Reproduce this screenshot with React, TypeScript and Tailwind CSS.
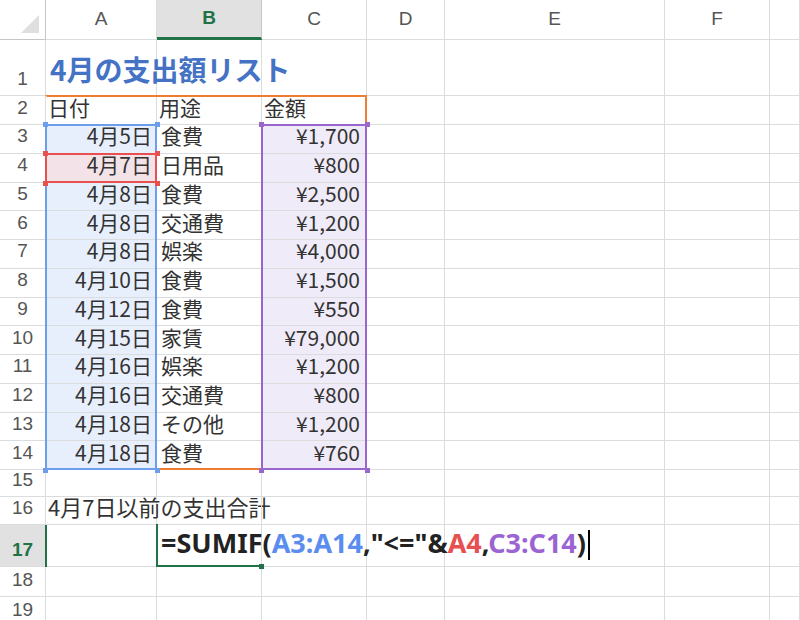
const cols = [46, 111, 105, 105, 78, 220, 105, 30];
const colX = cols.reduce<number[]>((a, w) => [...a, a[a.length - 1] + w], [0]);
const heights = [56, 29, ...Array(12).fill(28.75), 27, 28, 42, 30, 30];
const rowY = heights.reduce<number[]>((a, h) => [...a, a[a.length - 1] + h], [40]);

const dates = ['4月5日', '4月7日', '4月8日', '4月8日', '4月8日', '4月10日', '4月12日', '4月15日', '4月16日', '4月16日', '4月18日', '4月18日'];
const uses = ['食費', '日用品', '食費', '交通費', '娯楽', '食費', '食費', '家賃', '娯楽', '交通費', 'その他', '食費'];
const amounts = ['¥1,700', '¥800', '¥2,500', '¥1,200', '¥4,000', '¥1,500', '¥550', '¥79,000', '¥1,200', '¥800', '¥1,200', '¥760'];

const Box = ({ c1, r1, c2, r2, color, handles, noLeft }: { c1: number; r1: number; c2: number; r2: number; color: string; handles?: boolean; noLeft?: boolean }) => {
  const l = colX[c1], t = rowY[r1 - 1], w = colX[c2 + 1] - l, h = rowY[r2] - t;
  return (
    <div className="absolute" style={{ left: l - 1, top: t - 1, width: w + 1, height: h + 1, border: `2px solid ${color}`, borderLeftColor: noLeft ? 'transparent' : color }}>
      {handles &&
        [[-4, -4], [w - 3, -4], [-4, h - 3], [w - 3, h - 3]].map(([x, y], i) => (
          <div key={i} className="absolute w-[5px] h-[5px]" style={{ left: x, top: y, background: color }} />
        ))}
    </div>
  );
};

export default function App() {
  const cell = 'border-r border-b border-[#dadcdd] text-[21px] text-[#333] flex items-end pb-[1px] overflow-visible whitespace-nowrap';
  return (
    <div className="relative w-[800px] h-[620px] overflow-hidden bg-white" style={{ fontFamily: '"Noto Sans CJK JP", "Liberation Sans", sans-serif' }}>
      <div className="grid" style={{ gridTemplateColumns: cols.map((c) => c + 'px').join(' '), gridTemplateRows: [40, ...heights].map((h) => h + 'px').join(' ') }}>
        <div className="bg-white border-r border-b border-[#c6c6c6] relative">
          <div className="absolute right-[6px] bottom-[6px] w-0 h-0 border-l-[18px] border-l-transparent border-b-[18px] border-b-[#dfdfdf]" />
        </div>
        {['A', 'B', 'C', 'D', 'E', 'F', ''].map((l) => (
          <div key={l} className={`flex items-center justify-center text-[19px] border-r border-b ${l === 'B' ? 'bg-[#e1e1e1] text-[#217346] font-bold border-b-[3px] border-b-[#217346] border-r-[#c6c6c6]' : 'text-[#555] border-[#dadcdd]'}`} style={{ fontFamily: '"Liberation Sans", sans-serif' }}>
            {l}
          </div>
        ))}
        {heights.map((_, i) => {
          const r = i + 1;
          const rowCells: React.ReactNode[] = [];
          rowCells.push(
            <div key="h" className={`border-r border-b border-[#dadcdd] flex items-end justify-center pb-[2px] text-[19px] ${r === 17 ? 'bg-[#e1e1e1] text-[#217346] font-bold' : 'text-[#555]'}`} style={{ fontFamily: '"Liberation Sans", sans-serif' }}>
              {r}
            </div>
          );
          for (let c = 1; c <= 7; c++) {
            let content: React.ReactNode = null;
            let extra = '';
            if (r === 1 && c === 1) content = <span className="text-[28px] font-bold text-[#4472c4] pb-[4px] pl-[4px]">4月の支出額リスト</span>;
            if (r === 2) content = <span className="pl-[2px]">{['日付', '用途', '金額'][c - 1] ?? ''}</span>;
            if (r >= 3 && r <= 14) {
              const k = r - 3;
              if (c === 1) { content = dates[k]; extra = `justify-end pr-[4px] ${r === 4 ? 'bg-[#f3e3e8]' : 'bg-[#e8effc]'}`; }
              if (c === 2) { content = uses[k]; extra = 'pl-[4px]'; }
              if (c === 3) { content = amounts[k]; extra = 'justify-end pr-[6px] bg-[#f0ebf8]'; }
            }
            if (r === 16 && c === 1) content = <span className="pl-[2px] text-[22px]">4月7日以前の支出合計</span>;
            if (r === 17 && c === 2)
              content = (
                <span className="text-[27px] font-bold pl-[4px] pb-[2px] z-10 text-[#222]" style={{ fontFamily: '"Noto Sans", sans-serif' }}>
                  =SUMIF(<span className="text-[#5b8def]">A3:A14</span>,"&lt;="&amp;<span className="text-[#e8504f]">A4</span>,<span className="text-[#9a64d2]">C3:C14</span>)<span className="inline-block w-[2px] h-[30px] bg-black align-middle ml-[2px]" />
                </span>
              );
            rowCells.push(<div key={c} className={`${cell} ${extra}`}>{content}</div>);
          }
          return rowCells;
        })}
      </div>
      <Box c1={1} r1={2} c2={3} r2={14} color="#ed7d31" noLeft />
      <Box c1={1} r1={3} c2={1} r2={14} color="#6d9eeb" handles />
      <Box c1={1} r1={4} c2={1} r2={4} color="#e8504f" handles />
      <Box c1={3} r1={3} c2={3} r2={14} color="#9966cc" handles />
      <div className="absolute" style={{ left: colX[2] - 1, top: rowY[16] - 1, width: colX[3] - colX[2] + 1, height: rowY[17] - rowY[16] + 1, borderLeft: '2px solid #217346', borderBottom: '2px solid #217346' }} />
      <div className="absolute w-[5px] h-[5px] bg-[#217346]" style={{ left: colX[3] - 3, top: rowY[17] - 3 }} />
      <div className="absolute w-[2px] bg-[#217346]" style={{ left: colX[1] - 1, top: rowY[16], height: rowY[17] - rowY[16] }} />
    </div>
  );
}
